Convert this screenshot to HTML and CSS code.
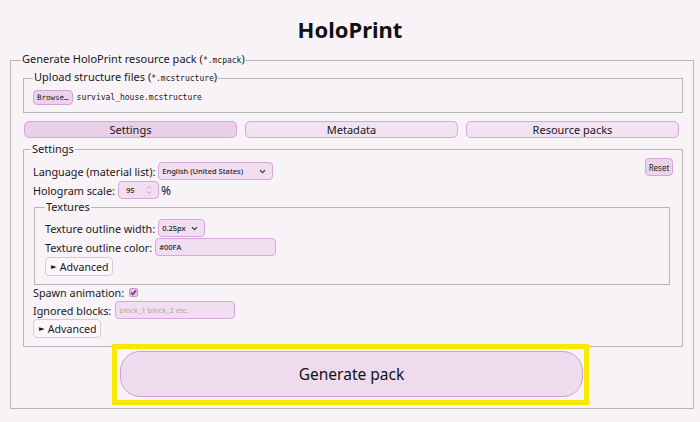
FILE: index.html
```html
<!DOCTYPE html>
<html lang="en">
<head>
<meta charset="utf-8">
<title>HoloPrint</title>
<link rel="stylesheet" href="styles.css">
</head>
<body>
<h1 class="title">HoloPrint</h1>
<form class="gen">
  <fieldset class="outer">
    <legend class="lg">Generate HoloPrint resource pack (<code class="mono">*.mcpack</code>)</legend>
    <fieldset class="upload">
      <legend class="lg">Upload structure files (<code class="mono">*.mcstructure</code>)</legend>
      <div class="file-row">
        <span class="browse">Browse…</span>
        <span class="file-name">survival_house.mcstructure</span>
      </div>
    </fieldset>
    <div class="tabs">
      <button type="button" class="tab active">Settings</button>
      <button type="button" class="tab">Metadata</button>
      <button type="button" class="tab">Resource packs</button>
    </div>
    <fieldset class="settings">
      <legend class="lg">Settings</legend>
      <button type="button" class="reset">Reset</button>
      <div class="row">
        <span>Language (material list):</span>
        <span class="sel sel-lang"><span class="sel-val">English (United States)</span><svg class="chev" width="7" height="5" viewBox="0 0 7 5"><path d="M1 1.2 L3.5 3.7 L6 1.2" fill="none" stroke="#333" stroke-width="1.2"/></svg></span>
      </div>
      <div class="row">
        <span>Hologram scale:</span>
        <span class="num"><span class="num-val">95</span><svg class="spin" width="6" height="10" viewBox="0 0 6 10"><path d="M1 3.5 L3 1.5 L5 3.5 M1 6.5 L3 8.5 L5 6.5" fill="none" stroke="#aaa" stroke-width="0.9"/></svg></span><span class="pct">%</span>
      </div>
      <fieldset class="textures">
        <legend class="lg">Textures</legend>
        <div class="row">
          <span>Texture outline width:</span>
          <span class="sel sel-width"><span class="sel-val">0.25px</span><svg class="chev" width="7" height="5" viewBox="0 0 7 5"><path d="M1 1.2 L3.5 3.7 L6 1.2" fill="none" stroke="#333" stroke-width="1.2"/></svg></span>
        </div>
        <div class="row">
          <span>Texture outline color:</span>
          <span class="txt txt-color">#00FA</span>
        </div>
        <div class="adv-row"><span class="adv"><span class="tri">►</span>Advanced</span></div>
      </fieldset>
      <div class="row row-check">
        <span>Spawn animation:</span>
        <span class="check"><svg width="9" height="9" viewBox="0 0 9 9"><path d="M2 4.6 L3.8 6.3 L7 2.6" fill="none" stroke="#7b2c7d" stroke-width="1.5"/></svg></span>
      </div>
      <div class="row row-ign">
        <span>Ignored blocks:</span>
        <span class="txt txt-ign placeholder">block_1 block_2 etc.</span>
      </div>
      <div class="adv-row adv-row-main"><span class="adv"><span class="tri">►</span>Advanced</span></div>
    </fieldset>
    <div class="gen-wrap">
      <button type="button" class="generate">Generate pack</button>
    </div>
  </fieldset>
</form>
</body>
</html>
```
FILE: styles.css
```css
html, body {
  margin: 0;
  padding: 0;
  background: #f7f3f7;
}
body {
  font-family: "Noto Sans", "Open Sans", sans-serif;
  font-size: 10.8px;
  color: #1a181a;
}
.title {
  margin: 15px 0 0;
  font-size: 22px;
  line-height: 28px;
  font-weight: 700;
  text-align: center;
  color: #111;
}
.gen {
  margin: 9px 6px 0 10px;
}
fieldset {
  border: 1px solid #bab6ba;
  margin: 0;
  min-width: 0;
}
.lg {
  padding: 0 1px;
  margin-left: -2px;
  line-height: 14px;
  font-size: 11px;
}
.mono {
  font-family: "DejaVu Sans Mono", "Liberation Mono", monospace;
  font-size: 8px;
}
.outer {
  padding: 2px 10px 3px 12px;
}
.upload {
  padding: 4px 9px 7px 9px;
}
.upload .lg {
  margin-left: 0;
}
.file-row {
  display: flex;
  align-items: center;
  gap: 4px;
  height: 15px;
}
.browse {
  display: inline-flex;
  align-items: center;
  height: 13px;
  padding: 0 3px;
  border: 1px solid #d3a3d5;
  border-radius: 4px;
  background: #ecd3ec;
  font-family: "DejaVu Sans Mono", "Liberation Mono", monospace;
  font-size: 7.5px;
}
.file-name {
  font-family: "DejaVu Sans Mono", "Liberation Mono", monospace;
  font-size: 8px;
}
.tabs {
  display: grid;
  grid-template-columns: 1fr 1fr 1fr;
  gap: 8px;
  margin: 8px 4px 0 1px;
}
.tab {
  height: 17px;
  padding: 0;
  border: 1px solid #d7a7d8;
  border-radius: 5px;
  background: #f2e3f2;
  font-family: "Noto Sans", sans-serif;
  font-size: 11px;
  color: #1a181a;
}
.tab.active {
  background: #e9cfe9;
}
.settings {
  margin-top: 4px;
  padding: 6px 9px 8px 9px;
}
.reset {
  float: right;
  height: 18px;
  width: 28px;
  padding: 0;
  margin-top: -4px;
  border: 1px solid #d7a7d8;
  border-radius: 4px;
  background: #ecd3ec;
  font-family: "Noto Sans", sans-serif;
  font-size: 8px;
  color: #222;
}
.row {
  display: flex;
  align-items: center;
  gap: 3px;
  height: 18px;
  margin-bottom: 1px;
}
.sel, .num, .txt {
  display: inline-flex;
  align-items: center;
  height: 18px;
  box-sizing: border-box;
  border: 1px solid #d7a7d8;
  border-radius: 4px;
  background: #f1dff1;
  font-size: 7.5px;
  font-weight: 500;
  color: #222;
}
.sel {
  justify-content: space-between;
  padding: 0 6px 0 3px;
}
.sel-lang { width: 115px; }
.sel-width { width: 47px; }
.num {
  width: 41px;
  justify-content: space-between;
  padding: 0 6px 0 7px;
}
.pct {
  font-size: 12px;
  margin-left: -1px;
}
.txt {
  padding: 0 3px;
}
.txt-color { width: 121px; }
.txt-ign { width: 120px; margin-left: 1px; }
.placeholder {
  color: #b0a6b0;
  font-weight: 400;
}
.textures {
  margin: 0 3px 0 1px;
  padding: 5px 10px 8px 10px;
}
.textures .lg {
  margin-left: 0;
}
.adv-row {
  display: flex;
  margin-top: 1px;
}
.adv-row-main {
  margin-top: 0;
}
.adv {
  display: inline-flex;
  align-items: center;
  gap: 3px;
  height: 19px;
  box-sizing: border-box;
  padding: 0 3px 0 5px;
  border: 1px solid #d9c9d9;
  border-radius: 4px;
  background: #faf6fa;
  font-size: 10.6px;
}
.tri {
  font-family: "DejaVu Sans", sans-serif;
  font-size: 7.5px;
}
.row-check {
  height: 14px;
  margin-bottom: 2px;
}
.row-ign {
  margin-bottom: 0;
}
.check {
  display: inline-flex;
  width: 9px;
  height: 9px;
  box-sizing: border-box;
  border: 1px solid #c996cb;
  border-radius: 2px;
  background: #e4c4e5;
  margin-left: 2px;
}
.check svg {
  margin: -1px;
}
.gen-wrap {
  display: flex;
  width: fit-content;
  margin: -3px 0 0 89px;
  padding: 2px 1px 3px 3px;
  border: 5px solid #f7ea00;
  position: relative;
}
.generate {
  width: 463px;
  height: 46px;
  border: 1px solid #d39dd6;
  border-radius: 20px;
  background: #eedcee;
  font-family: "Noto Sans", sans-serif;
  font-size: 15.5px;
  color: #111;
}
```
